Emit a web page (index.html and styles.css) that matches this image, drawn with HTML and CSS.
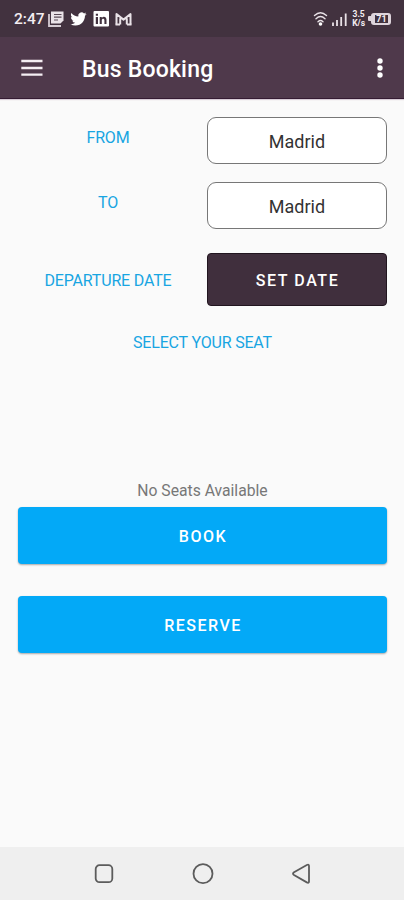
FILE: index.html
```html
<!DOCTYPE html>
<html lang="en">
<head>
<meta charset="utf-8">
<title>Bus Booking</title>
<link rel="stylesheet" href="styles.css">
</head>
<body>
<div class="screen">
  <div class="status">
    <span class="clock">2:47</span>
    <svg class="notifications" width="86" height="18" viewBox="0 0 86 18">
      <path d="M1 4v12h12" fill="none" stroke="#d5ccd3" stroke-width="1.8"/>
      <path d="M3 1.500h12.500v9l-3 3H3z" fill="#e9e2e7"/>
      <path d="M6 4.500h7.500M6 7.200h7.500M6 10h4" stroke="#594956" stroke-width="1.200"/>
      <path transform="translate(22.300 .8) scale(.68)" fill="#fff" d="M23.950 4.570a10 10 0 0 1-2.820.77 4.960 4.960 0 0 0 2.160-2.720c-.95.55-2 .95-3.130 1.180a4.920 4.920 0 0 0-8.380 4.480C7.690 8.100 4.070 6.130 1.640 3.160a4.820 4.820 0 0 0-.67 2.480c0 1.710.87 3.210 2.190 4.100a4.900 4.900 0 0 1-2.230-.62v.06a4.920 4.920 0 0 0 3.950 4.830 5 5 0 0 1-2.210.08 4.940 4.940 0 0 0 4.600 3.420A9.870 9.870 0 0 1 0 19.540a14 14 0 0 0 7.550 2.210c9.050 0 14-7.500 14-13.980 0-.21 0-.42-.02-.63a9.940 9.940 0 0 0 2.420-2.570z"/>
      <path fill="#fff" fill-rule="evenodd" d="M46.500 1h13.500a1 1 0 0 1 1 1v13.500a1 1 0 0 1-1 1H46.500a1 1 0 0 1-1-1V2a1 1 0 0 1 1-1zM47.800 7v7H50V7zM47.800 3.700v2H50v-2zM51.700 7v7h2.100v-3.700c0-2 2.600-2.100 2.600 0V14h2.100V9.700c0-3.400-3.500-3.700-4.700-1.800V7z"/>
      <path d="M68.500 14.500V4l7 5.600 7-5.600v10.500M72.200 14.500V8.200M78.800 14.500V8.200" fill="none" stroke="#e9e2e7" stroke-width="2" stroke-linejoin="round"/>
      <path d="M67.500 14.500h4.500M79 14.500h4.500" stroke="#e9e2e7" stroke-width="2"/>
    </svg>
    <svg class="signals" width="38" height="18" viewBox="0 0 38 18">
      <g fill="none" stroke="#e9e2e7" stroke-width="1.400" stroke-linecap="round">
        <path d="M1.500 5.500Q7.500 0 13.500 5.500M3 8.700Q7.500 4.500 12 8.700M5 11.700Q7.500 9.500 10 11.700"/>
      </g>
      <circle cx="7.500" cy="14" r="1.800" fill="#fff"/>
      <path d="M20 12.500V16M24 10v6M28.200 7v9M32.700 3.500V16" stroke="#e9e2e7" stroke-width="1.800"/>
    </svg>
    <span class="speed"><span>3.5</span><span>K/s</span></span>
    <span class="battery"><span class="level">71</span></span>
  </div>
  <header class="appbar">
    <svg width="22" height="18" viewBox="0 0 22 18"><path d="M.3 2h21.200M.3 9h21.200M.3 15.700h21.200" stroke="#f5eef3" stroke-width="2.300"/></svg>
    <h1>Bus Booking</h1>
    <svg class="more" width="8" height="22" viewBox="0 0 8 22" fill="#fff"><circle cx="4" cy="4" r="2.700"/><circle cx="4" cy="11" r="2.700"/><circle cx="4" cy="18" r="2.700"/></svg>
  </header>
  <main>
    <div class="row"><span class="label">FROM</span><div class="select">Madrid</div></div>
    <div class="row"><span class="label">TO</span><div class="select">Madrid</div></div>
    <div class="row date-row"><span class="label">DEPARTURE DATE</span><button class="date">SET DATE</button></div>
    <p class="label seat">SELECT YOUR SEAT</p>
    <p class="empty">No Seats Available</p>
    <button class="action">BOOK</button>
    <button class="action">RESERVE</button>
  </main>
  <nav>
    <svg width="22" height="22" viewBox="0 0 22 22"><rect x="2.700" y="2.200" width="16.600" height="17" rx="3.800"/></svg>
    <svg width="22" height="22" viewBox="0 0 22 22"><circle cx="11" cy="10.700" r="9.500"/></svg>
    <svg width="22" height="22" viewBox="0 0 22 22"><path d="M3 9.300 15.800 2q2.200-1 2.200 1v15.400q0 2-2.200 1L3 12.100q-2-1.400 0-2.800z"/></svg>
  </nav>
</div>
</body>
</html>
```
FILE: styles.css
```css
* { box-sizing: border-box; }
body { margin: 0; font-family: Roboto, sans-serif; background: #fafafa; }
h1, p { margin: 0; }
button { border: 0; padding: 2px 0 0 1px; font-family: inherit; color: #fff; }
svg { display: block; flex: none; }
.screen { width: 404px; height: 900px; display: flex; flex-direction: column; overflow: hidden; }
.status { height: 37px; background: #42323f; color: #f3edf1; display: flex; align-items: center; padding: 0 13px 0 14px; flex: none; }
.clock { width: 35px; font-size: 15.5px; font-weight: 500; white-space: nowrap; }
.signals { margin-left: 179px; }
.speed { width: 15px; display: flex; flex-direction: column; font-size: 8.5px; line-height: 9px; font-weight: 700; text-align: center; }
.battery { margin-left: 2px; display: flex; align-items: center; }
.battery::before { content: ""; width: 3px; height: 5px; background: #ded5dc; border-radius: 1px 0 0 1px; }
.level { width: 20px; height: 12px; border: 2px solid #ded5dc; border-left-width: 4px; border-right-width: 3px; border-radius: 3px; font-size: 9px; line-height: 8px; font-weight: 700; text-align: center; }
.appbar { height: 62px; background: #4f394b; border-bottom: 1px solid #351c33; box-shadow: 0 1px 1px #d9cdd7; display: flex; align-items: center; padding: 0 20px 0 21px; flex: none; }
.appbar h1 { margin: 4px 0 0 39px; color: #fff; font-size: 23px; line-height: 28px; font-weight: 500; letter-spacing: .2px; }
.more { margin-left: auto; }
main { flex: 1; padding: 18px 17px 0 18px; }
.row { display: grid; grid-template-columns: 180px 180px; grid-template-rows: 100%; column-gap: 9px; height: 47px; margin-bottom: 17.500px; }
.row .label { margin-top: 11.4px; }
.label { color: #18a5e2; font-size: 16px; line-height: 20px; text-align: center; letter-spacing: -.18px; }
.select { border: 1px solid #777; border-radius: 9px; background: #fff; color: #333; font-size: 18px; line-height: 47px; text-align: center; letter-spacing: 0; }
.date-row { margin: 24px 0 0; height: 53px; }
.date-row .label { margin-top: 18.4px; }
.date { border: 1px solid #21151f; border-radius: 4px; background: #402f3d; font-size: 16px; font-weight: 500; letter-spacing: 1.6px; }
.seat { margin-top: 27px; }
.empty { margin-top: 128px; color: #777; font-size: 15.7px; line-height: 20px; text-align: center; }
.action { display: block; width: 100%; height: 57px; margin: 6px 0 32px; border-radius: 4px; background: #03a9f7; box-shadow: 0 1px 2px #0005; font-size: 16px; font-weight: 500; letter-spacing: 1.5px; }
nav { height: 53px; flex: none; background: #efefef; display: flex; justify-content: center; align-items: center; gap: 77px; padding-left: 2px; }
nav svg { fill: none; stroke: #5c5c5c; stroke-width: 1.8; }
```
